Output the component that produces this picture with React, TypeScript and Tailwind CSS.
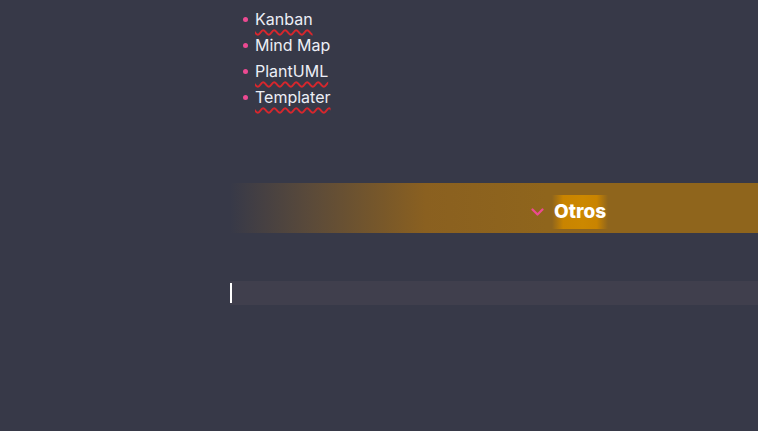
import React from "react";

const ITEMS: { label: string; misspelled: boolean }[] = [
  { label: "Kanban", misspelled: true },
  { label: "Mind Map", misspelled: false },
  { label: "PlantUML", misspelled: true },
  { label: "Templater", misspelled: true },
];

/** Collapsed heading band, orange fade-in from the left. */
function Heading({ text }: { text: string }) {
  return (
    <div className="h-[50px] flex items-center bg-[linear-gradient(90deg,#373948_0%,#5a4a3a_15%,#8a6020_37%,#8f651c_60%,#8f651c_100%)]">
      <div className="flex items-center ml-[301px] mt-[8px]">
        <svg width="13" height="9" viewBox="0 0 13 9" className="mr-[8px] mt-[1px]">
          <path d="M1.5 1.5 L6.5 6.5 L11.5 1.5" fill="none" stroke="#ec4a92" strokeWidth="2.2" strokeLinecap="round" strokeLinejoin="round" />
        </svg>
        <span className="h-[34px] px-[2px] flex items-center text-[19px] font-extrabold text-white bg-[linear-gradient(90deg,rgba(201,132,0,0)_0%,#c98400_20%,#cc8800_55%,#c98400_80%,rgba(201,132,0,0)_100%)]">
          {text}
        </span>
      </div>
    </div>
  );
}

export default function App() {
  return (
    <div className="w-[758px] h-[431px] bg-[#373948] flex overflow-hidden" style={{ fontFamily: "Inter, 'Noto Sans', sans-serif" }}>
      <div className="w-[230px] shrink-0" />
      <div className="flex-1 flex flex-col">
        <ul className="pt-[6px] pl-[13px] flex flex-col">
          {ITEMS.map((it) => (
            <li key={it.label} className="h-[26px] flex items-center text-[16px] text-[#eceef6]">
              <span className="w-[5px] h-[5px] rounded-full bg-[#ec4a92] mr-[7px]" />
              <span className={it.misspelled ? "underline decoration-wavy decoration-[#d8262c] underline-offset-[4px] decoration-[1.5px]" : ""}>{it.label}</span>
            </li>
          ))}
        </ul>
        <div className="h-[73px]" />
        <Heading text="Otros" />
        <div className="h-[48px]" />
        <div className="h-[24px] bg-[#403f4d] flex items-center">
          <div className="w-[2px] h-[20px] bg-white" />
        </div>
      </div>
    </div>
  );
}
